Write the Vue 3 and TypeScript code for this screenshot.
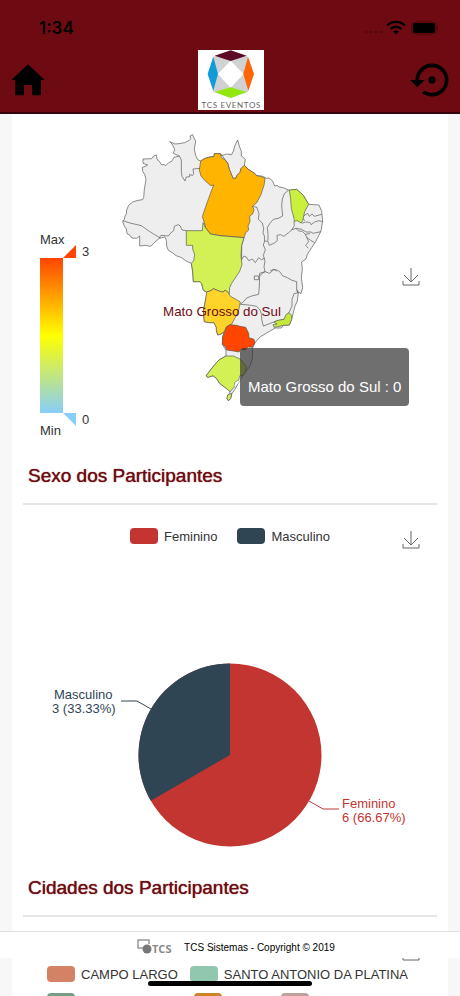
<script setup lang="ts">
import { ref } from 'vue'

interface LegendItem {
  name: string
  color: string
  width?: number
}

interface Region {
  id: string
  color: string
  d: string
}

const sexLegend: LegendItem[] = [
  { name: 'Feminino', color: '#c23531' },
  { name: 'Masculino', color: '#2f4554' },
]

const cityLegend: LegendItem[] = [
  { name: 'CAMPO LARGO', color: '#d48265' },
  { name: 'SANTO ANTONIO DA PLATINA', color: '#91c7ae' },
]

const moreCities: LegendItem[] = [
  { name: '', color: '#749f83', width: 135 },
  { name: '', color: '#ca8622', width: 75 },
  { name: '', color: '#bda29a', width: 28 },
]

const outline =
  'M38 287L43 280L45 270L49 264L50 252L56 238L68 228L84 223L98 221L101 215L103 190L108 160L104 145L98 136L97 124L106 121L113 117L99 112L99 99L125 98L131 90L139 87L141 100L148 106L155 117L162 115L167 119L176 110L185 106L192 94L208 90L190 82L194 70L186 54L179 47L195 54L207 53L224 50L238 43L242 38L240 30L248 26L251 34L257 45L253 70L257 88L263 101L272 105L285 97L300 93L312 92L313 83L331 83L334 89L350 84L365 86L371 73L374 60L383 42L388 60L394 76L394 90L406 100L403 118L415 130L435 143L440 149L455 150L470 157L477 156L488 165L494 180L501 178L507 183L520 185L537 193L560 190L580 208L596 235L627 237L635 256L638 285L633 315L618 345L605 365L592 385L588 399L575 408L577 430L574 455L578 485L573 503L565 498L562 525L555 540L550 560L545 580L538 597L520 598L514 606L496 606L480 615L450 633L435 650L427 667L428 695L420 720L405 740L388 764L378 785L366 802L362 818L355 824L351 817L354 808L362 796L342 782L328 771L320 758L309 749L294 754L288 750L302 731L316 714L328 701L348 690L348 673L337 655L338 633L342 618L333 624L323 627L319 612L319 604L312 590L298 590L283 587L280 555L286 525L292 498L280 493L275 473L270 467L250 467L248 435L244 412L228 405L215 395L198 389L187 380L175 373L170 360L169 343L165 333L148 337L135 348L122 361L105 358L89 360L89 330L80 337L65 336L61 329L51 323L49 309L43 300Z'

const regions: Region[] = [
  {
    id: 'para',
    color: '#ffb400',
    d: 'M272 105L285 97L300 93L312 92L313 83L331 83L334 95L345 101L353 111L358 130L363 142L369 157L377 157L381 148L390 139L393 128L403 118L415 130L435 143L440 149L455 152L465 157L462 178L452 208L440 230L427 242L432 250L428 264L419 270L420 287L414 300L416 312L407 320L402 335L330 329L301 324L287 306L283 290L277 272L287 242L306 190L311 177L302 179L284 163L273 150L268 132Z',
  },
  {
    id: 'mato-grosso',
    color: '#d3f055',
    d: 'M229 314L277 314L279 290L287 306L301 324L330 329L402 335L395 358L393 390L396 415L389 436L381 448L365 472L359 485L358 503L345 492L340 498L329 496L310 488L303 494L290 498L280 493L275 473L270 467L250 467L248 435L244 412L251 404L254 385L248 370L248 358L229 358Z',
  },
  {
    id: 'mato-grosso-do-sul',
    color: '#ffd42a',
    d: 'M290 498L303 494L310 488L329 496L340 498L345 492L355 500L361 511L376 519L391 528L388 543L385 557L376 574L365 594L349 603L342 618L333 624L323 627L319 612L319 604L312 590L298 590L283 587L280 555L286 525Z',
  },
  {
    id: 'parana',
    color: '#ff4500',
    d: 'M350 602L360 596L380 598L390 601L407 604L416 622L417 635L432 640L435 650L427 664L415 663L405 672L393 670L387 678L370 675L350 672L346 662L337 655L338 633Z',
  },
  {
    id: 'rio-grande-do-sul',
    color: '#d3f055',
    d: 'M348 690L370 690L390 699L400 710L410 724L405 740L397 750L389 750L387 762L376 768L372 784L360 797L342 782L328 771L320 758L309 749L294 754L288 750L302 731L316 714L328 701ZM353 807L365 802L362 818L355 824L351 817Z',
  },
  {
    id: 'ceara',
    color: '#c8f03c',
    d: 'M538 192L560 190L580 208L596 235L584 257L578 284L573 291L562 284L553 286L552 277L544 248L542 220Z',
  },
  {
    id: 'rio-de-janeiro',
    color: '#c5e83c',
    d: 'M492 588L504 583L522 580L528 566L537 560L545 568L545 580L538 597L520 598L505 602L492 604L489 596L501 594Z',
  },
]

const borders =
  'M208 90L214 102L214 137L216 151L225 165L229 153L239 152L239 145L247 149L251 143L249 129L270 127' +
  'M38 284L60 291L94 299L118 316L134 326L151 336' +
  'M148 336L153 328L166 329L175 330L181 322L191 314L193 301L204 296L211 300L216 312L229 314' +
  'M334 85L345 101L353 111L358 130L363 142L369 157L377 157L381 148L390 139L393 128L403 118' +
  'M535 193L523 203L517 219L515 239L518 270L505 277L490 280L479 293L472 305L474 325L474 344' +
  'M427 242L440 243L447 263L445 280L457 291L461 307L459 320L463 330L464 345' +
  'M464 345L474 346L478 358L493 351L502 344L501 328L512 326L521 331L536 320L545 312L553 299L552 286' +
  'M545 312L558 307L566 315L577 316L586 325L600 323' +
  'M581 270L593 262L598 271L606 264L613 271L635 265' +
  'M575 292L587 288L599 289L603 296L614 288L627 284L638 287' +
  'M584 284L578 275M558 307L575 310L588 318L603 318L609 322L633 317' +
  'M586 325L590 334L602 343L614 350M590 334L596 347L587 358L595 367' +
  'M402 335L395 358L395 404M395 400L402 390L409 393L416 404L427 399L436 410L446 395L454 401L464 397' +
  'M464 345L460 357L466 371L460 388L465 405L462 423L465 437L449 442L448 480L446 505L425 510L410 516L398 530L391 533' +
  'M449 450L457 442L465 437L479 442L492 430L503 433L512 440L517 449L532 455L546 463L560 467L560 490L565 502' +
  'M560 490L563 500L552 503L546 520L546 540L537 560L522 580L499 585L460 600L455 580L455 566L450 552L440 541L424 538L405 536L391 535' +
  'M433 450H446V461H433ZM480 435L490 430L500 435'

const hovered = ref('Mato Grosso do Sul : 0')
</script>

<template>
  <div class="screen">
    <header class="topbar">
      <div class="status">
        <span class="clock">1:34</span>
        <svg class="signals" width="78" height="16" viewBox="0 0 78 16" aria-hidden="true">
          <path d="M2 12h19" stroke="#3b0508" stroke-width="1" stroke-dasharray="3 2" />
          <path d="M25 5.500A13 13 0 0 1 43 5.500" fill="none" stroke="#000" stroke-width="2.400" />
          <path d="M28.500 9A8 8 0 0 1 39.500 9" fill="none" stroke="#000" stroke-width="2.400" />
          <path d="M31 11.500Q34 9.500 37 11.500L34 14.500Z" />
          <rect x="50" y="2" width="24" height="12" rx="3" fill="none" stroke="#44060a" />
          <rect x="51" y="3" width="22" height="10" rx="2" />
          <path d="M75.500 6v4" stroke="#44060a" />
        </svg>
      </div>
      <nav class="nav">
        <button class="icon-button" type="button" aria-label="Início">
          <svg width="40" height="40" viewBox="24 180 120 120">
            <path d="M34 240L84 193L134 240H123V286H96V255H72V286H46V240Z" />
          </svg>
        </button>
        <svg class="brand" width="66" height="60" viewBox="0 0 198 180" role="img" aria-label="TCS Eventos">
          <rect width="198" height="180" fill="#fff" />
          <path d="M46 20L98 2L150 20L167 72L150 125L98 144L46 125L29 72Z" fill="#d0d1d3" />
          <path d="M98 32L137 72L98 113L59 72Z" fill="#fff" />
          <path d="M98 1L146 17L98 33L50 17Z" fill="#5d0a26" />
          <path d="M46 20L60 72L46 122L29 72Z" fill="#109cd8" />
          <path d="M150 20L168 72L151 122L136 72Z" fill="#ff6505" />
          <path d="M98 112L146 126L98 144L50 126Z" fill="#92e80c" />
          <text x="100" y="175" text-anchor="middle" class="brand-text">TCS EVENTOS</text>
        </svg>
        <button class="icon-button" type="button" aria-label="Recarregar">
          <svg width="44" height="44" viewBox="0 0 24 24">
            <path d="M12 3A9 9 0 0 0 3 12H0L4 16L8 12H5A7 7 0 0 1 12 5A7 7 0 0 1 19 12A7 7 0 0 1 12 19C10.500 19 9.090 18.500 7.940 17.700L6.500 19.140C8.040 20.300 9.940 21 12 21A9 9 0 0 0 21 12A9 9 0 0 0 12 3M14 12A2 2 0 0 0 12 10A2 2 0 0 0 10 12A2 2 0 0 0 12 14A2 2 0 0 0 14 12Z" />
          </svg>
        </button>
      </nav>
    </header>

    <main class="card">
      <section class="map-panel">
        <div class="scale">
          <span class="scale-label">Max</span>
          <div class="scale-body">
            <div class="scale-bar"></div>
            <div class="handles">
              <span class="handle"><i class="tri tri-top"></i>3</span>
              <span class="handle"><i class="tri tri-bottom"></i>0</span>
            </div>
          </div>
          <span class="scale-label">Min</span>
        </div>
        <div class="map">
          <svg class="map-drawing" viewBox="0 0 690 855" role="img" aria-label="Brasil">
            <g stroke="#555" stroke-width="2" stroke-linejoin="round">
              <path :d="outline" fill="#eee" />
              <path :d="borders" fill="none" />
              <path v-for="r in regions" :key="r.id" :d="r.d" :fill="r.color" />
              <path d="M389 750L397 750L390 765L376 784L372 780L376 768L387 762Z" fill="#fff" stroke-width="1" />
            </g>
            <text x="336" y="570" text-anchor="middle" class="map-label">Mato Grosso do Sul</text>
          </svg>
          <div class="tooltip">{{ hovered }}</div>
        </div>
        <button class="download map-download" type="button" aria-label="Salvar imagem">
          <svg width="18" height="20" viewBox="0 0 18 20"><path d="M9 1V15M2 8L9 15L16 8M1 14V18H17V14" /></svg>
        </button>
      </section>

      <section>
        <h2 class="title">Sexo dos Participantes</h2>
        <div class="chart pie-chart">
          <div class="legend">
            <button v-for="item in sexLegend" :key="item.name" class="legend-item" type="button">
              <span class="swatch" :style="{ background: item.color }"></span>{{ item.name }}
            </button>
          </div>
          <button class="download chart-download" type="button" aria-label="Salvar imagem">
            <svg width="18" height="20" viewBox="0 0 18 20"><path d="M9 1V15M2 8L9 15L16 8M1 14V18H17V14" /></svg>
          </button>
          <svg class="pie" viewBox="0 0 436 200" role="img" aria-label="Sexo dos Participantes">
            <circle cx="218" cy="100" r="91.500" fill="#c23531" />
            <path d="M218 100V8.500A91.500 91.500 0 0 0 138.760 145.750Z" fill="#2f4554" />
            <path d="M139 54L125 46H109" fill="none" stroke="#2f4554" />
            <path d="M297 146L311 154H327" fill="none" stroke="#c23531" />
            <g fill="#2f4554" class="pie-label">
              <text x="42" y="44">Masculino</text>
              <text x="40" y="58">3 (33.33%)</text>
            </g>
            <g fill="#c23531" class="pie-label">
              <text x="330" y="153">Feminino</text>
              <text x="330" y="167">6 (66.67%)</text>
            </g>
          </svg>
        </div>
      </section>

      <section>
        <h2 class="title">Cidades dos Participantes</h2>
        <div class="chart city-chart">
          <button class="download chart-download" type="button" aria-label="Salvar imagem">
            <svg width="18" height="20" viewBox="0 0 18 20"><path d="M9 1V15M2 8L9 15L16 8M1 14V18H17V14" /></svg>
          </button>
          <div class="legend city-legend">
            <button v-for="item in cityLegend" :key="item.name" class="legend-item" type="button">
              <span class="swatch" :style="{ background: item.color }"></span>{{ item.name }}
            </button>
          </div>
          <div class="legend city-legend">
            <span v-for="item in moreCities" :key="item.color" class="legend-item" :style="{ width: item.width + 'px' }">
              <span class="swatch" :style="{ background: item.color }"></span>
            </span>
          </div>
        </div>
      </section>
    </main>

    <footer class="footer">
      <svg width="37" height="18" viewBox="0 0 37 18" role="img" aria-label="TCS">
        <path d="M6 10H1V2H12V6" fill="none" stroke="#999" stroke-width="1.500" />
        <circle cx="10" cy="11" r="4.500" fill="#777" />
        <text x="15" y="15" class="footer-mark">TCS</text>
      </svg>
      <span>TCS Sistemas - Copyright © 2019</span>
    </footer>
    <div class="home-indicator"></div>
  </div>
</template>

<style>
body {
  margin: 0;
  background: #f7f7f7;
}
</style>

<style scoped>
.screen {
  height: 100vh;
  overflow: hidden;
  display: flex;
  flex-direction: column;
  font-family: 'Liberation Sans', Arial, sans-serif;
  font-size: 13px;
  color: #333;
  background: #f7f7f7;
}

button {
  padding: 0;
  border: 0;
  background: none;
  font: inherit;
  color: inherit;
}

svg {
  display: block;
}

.topbar {
  flex: none;
  background: #6e0b12;
  border-bottom: 2px solid #35040a;
}

.status {
  display: flex;
  justify-content: space-between;
  align-items: center;
  height: 34px;
  padding: 11px 20px 0 39px;
}

.clock {
  font: 600 17px/20px Inter, sans-serif;
  color: #000;
}

.nav {
  display: grid;
  grid-template-columns: 1fr auto 1fr;
  align-items: center;
  height: 60px;
  padding: 5px 6px 2px 8px;
}

.icon-button:last-child {
  justify-self: end;
}

.icon-button:first-child {
  justify-self: start;
}

.brand-text {
  font-family: Lato, sans-serif;
  font-size: 24px;
  font-weight: 400;
  letter-spacing: 2px;
  fill: #666;
}

.card {
  flex: 1;
  min-height: 0;
  overflow: hidden;
  margin: 0 12px;
  background: #fff;
}

.map-panel {
  display: grid;
  grid-template-columns: 98px 230px 1fr;
  align-items: start;
  height: 350px;
  box-sizing: border-box;
  padding-top: 12px;
}

.map {
  position: relative;
}

.map-drawing {
  width: 100%;
}

.map-label {
  font-size: 40px;
  fill: #6e0b12;
}

.tooltip {
  position: absolute;
  left: 130px;
  top: 222px;
  padding: 27px 8px 7px;
  border-radius: 4px;
  background: rgba(50, 50, 50, 0.7);
  color: #fff;
  font-size: 15px;
  line-height: 24px;
  white-space: nowrap;
}

.scale {
  padding: 106px 0 0 28px;
}

.scale-label {
  display: block;
  line-height: 16px;
}

.scale-body {
  display: flex;
  height: 155px;
  margin: 10px 0;
}

.scale-bar {
  width: 23px;
  background: linear-gradient(#ff4500, #ffff00 50%, #87cefa);
}

.handles {
  display: flex;
  flex-direction: column;
  justify-content: space-between;
  margin: -13px 0;
}

.handle {
  display: flex;
  align-items: center;
  gap: 6px;
  height: 13px;
}

.tri {
  width: 13px;
  height: 13px;
}

.tri-top {
  background: #ff4500;
  clip-path: polygon(100% 0, 100% 100%, 0 100%);
}

.tri-bottom {
  background: #87cefa;
  clip-path: polygon(0 0, 100% 0, 100% 100%);
}

.download path {
  fill: none;
  stroke: #666;
}

.map-download {
  justify-self: end;
  margin: 141px 28px 0 0;
}

.title {
  margin: 0 16px;
  font-size: 19px;
  font-weight: 400;
  line-height: 24px;
  color: #6e0b12;
  text-shadow: 0 0 1px #6e0b12;
}

.chart {
  position: relative;
  margin-top: 15px;
}

.chart::before {
  content: '';
  display: block;
  height: 2px;
  margin: 0 11px;
  background: #e6e6e6;
}

.pie-chart {
  height: 373px;
}

.legend {
  display: flex;
  justify-content: center;
  gap: 20px;
  padding-top: 21px;
}

.legend-item {
  display: flex;
  align-items: center;
  gap: 6px;
  height: 20px;
  white-space: nowrap;
}

.swatch {
  width: 28px;
  height: 16px;
  border-radius: 4px;
}

.chart-download {
  position: absolute;
  right: 28px;
  top: 27px;
}

.pie {
  width: 100%;
  margin-top: 109px;
}

.pie-label {
  font-size: 13px;
}

.city-chart {
  padding-bottom: 20px;
}

.city-legend {
  justify-content: flex-start;
  gap: 12px;
  padding: 7px 35px 0;
}

.chart-download + .city-legend {
  padding-top: 47px;
}

.footer {
  position: fixed;
  left: 0;
  right: 0;
  bottom: 38px;
  display: flex;
  justify-content: center;
  align-items: center;
  gap: 10px;
  height: 27px;
  padding: 4px 0 0 12px;
  box-sizing: border-box;
  border-top: 1px solid #dedede;
  background: #fff;
  font-size: 10px;
  color: #000;
}

.footer-mark {
  font-family: 'Open Sans', sans-serif;
  font-size: 11px;
  font-weight: 700;
  fill: #888;
}

.home-indicator {
  position: fixed;
  left: 50%;
  bottom: 10px;
  width: 164px;
  height: 5px;
  border-radius: 3px;
  background: #000;
  transform: translateX(-50%);
}
</style>
